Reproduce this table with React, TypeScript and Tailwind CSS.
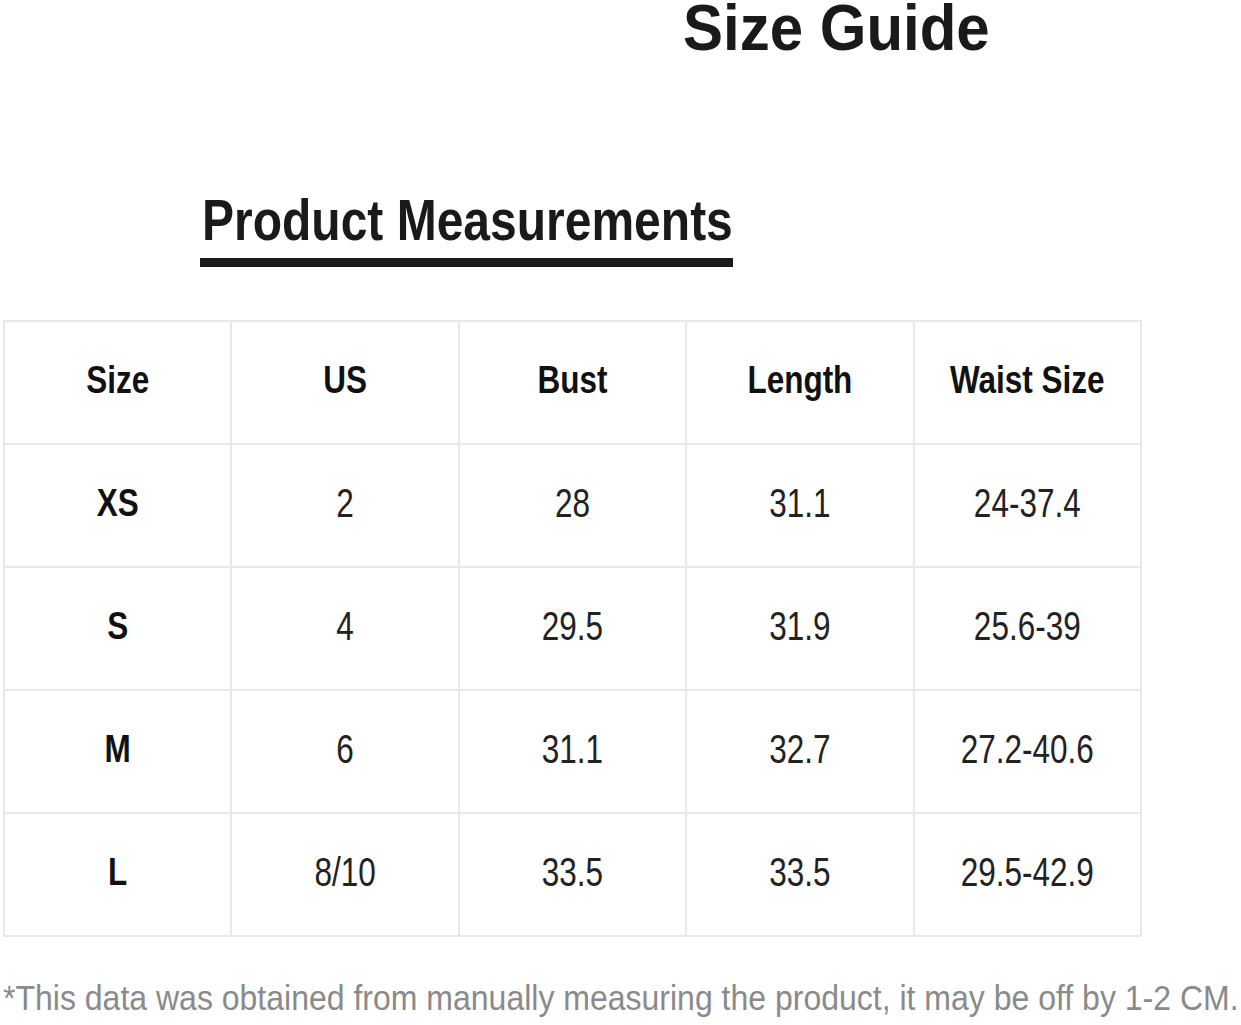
import React from "react";

const headers = ["Size", "US", "Bust", "Length", "Waist Size"];
const rows = [
  ["XS", "2", "28", "31.1", "24-37.4"],
  ["S", "4", "29.5", "31.9", "25.6-39"],
  ["M", "6", "31.1", "32.7", "27.2-40.6"],
  ["L", "8/10", "33.5", "33.5", "29.5-42.9"],
];

export default function App() {
  return (
    <div
      className="w-[1241px] h-[1025px] bg-white overflow-hidden"
      style={{ fontFamily: '"Liberation Sans", Arial, sans-serif' }}
    >
      <div className="h-[60px] pl-[683px] pt-[2px]">
        <span className="inline-block text-[60px] leading-[58px] font-bold text-[#1a1a1a] whitespace-nowrap origin-bottom scale-y-[1.07]">
          Size Guide
        </span>
      </div>

      <div className="mt-[142px] h-[48px] pl-[202px]">
        <span className="inline-block text-[48px] leading-[48px] font-bold text-[#1a1a1a] whitespace-nowrap origin-bottom scale-y-[1.19]">
          Product Measurements
        </span>
      </div>
      <div className="mt-[8px] ml-[200px] w-[533px] h-[9px] bg-[#1a1a1a]" />

      <div className="mt-[53px] ml-[3px] w-[1139px] grid grid-cols-5 border-l-2 border-t-2 border-[#e8e8e8]">
        {headers.map((h) => (
          <div
            key={h}
            className="h-[123px] pb-[4px] flex items-center justify-center border-r-2 border-b-2 border-[#e8e8e8]"
          >
            <span className="inline-block text-[31.5px] leading-none font-bold text-[#111] whitespace-nowrap scale-y-[1.22]">
              {h}
            </span>
          </div>
        ))}
        {rows.map((r, ri) =>
          r.map((c, ci) => (
            <div
              key={ri + "-" + ci}
              className="h-[123px] pb-[4px] flex items-center justify-center border-r-2 border-b-2 border-[#e8e8e8]"
            >
              {ci === 0 ? (
                <span className="inline-block text-[31.5px] leading-none font-bold text-[#111] whitespace-nowrap scale-y-[1.22]">
                  {c}
                </span>
              ) : (
                <span className="inline-block text-[31.5px] leading-none text-[#222] whitespace-nowrap scale-y-[1.28]">
                  {c}
                </span>
              )}
            </div>
          ))
        )}
      </div>

      <div className="mt-[47px] pl-[3px] h-[32px]">
        <span className="inline-block text-[32px] leading-[32px] text-[#8a8a8a] whitespace-nowrap origin-bottom scale-y-[1.12]">
          *This data was obtained from manually measuring the product, it may be off by 1-2 CM.
        </span>
      </div>
    </div>
  );
}
